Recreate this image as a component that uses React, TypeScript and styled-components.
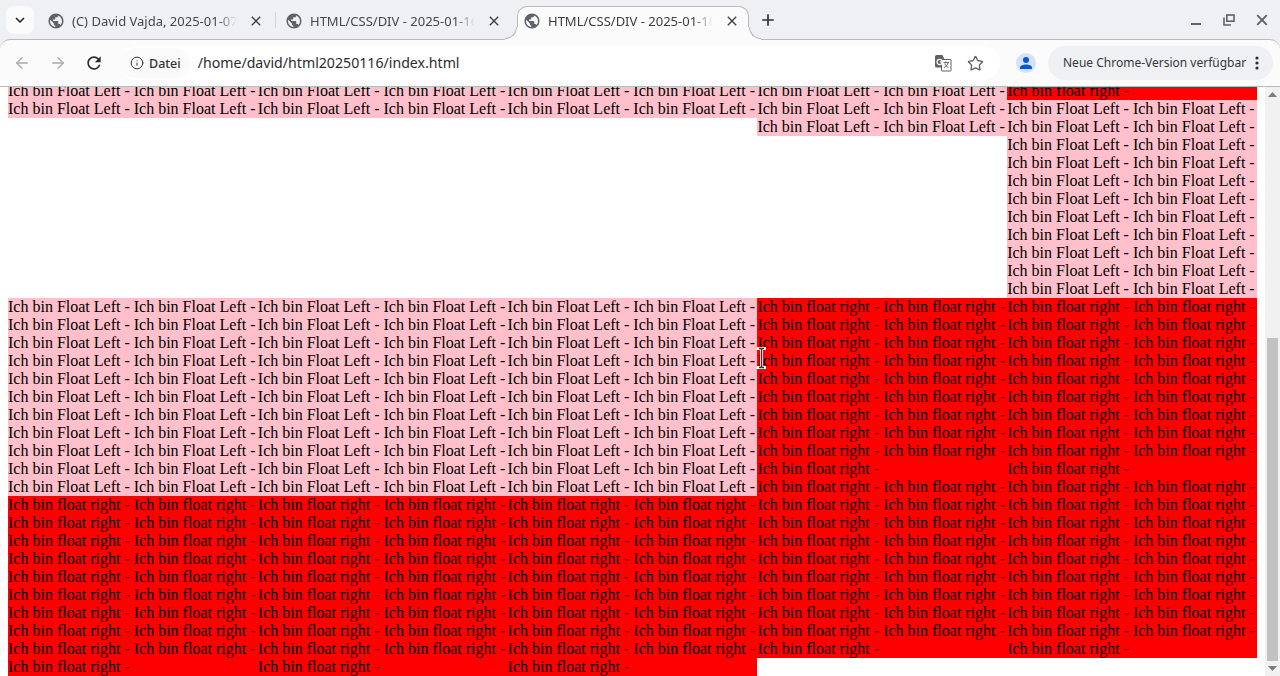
import React from "react";
import styled, { createGlobalStyle, css } from "styled-components";
import { MdPublic, MdRefresh, MdClose, MdAdd, MdExpandMore } from "react-icons/md";
import { ArrowLeft, ArrowRight, Info, Star } from "lucide-react";

const Global = createGlobalStyle`
  html, body { margin: 0; padding: 0; height: 100%; overflow: hidden; background: #fff; }
  #root { height: 100%; }
`;

const Page = styled.div`
  width: 1280px;
  height: 676px;
  display: flex;
  flex-direction: column;
  overflow: hidden;
  background: #eff0f3;
  font-family: "Noto Sans", sans-serif;
`;

const TabStrip = styled.div`
  height: 39px;
  flex: none;
  display: flex;
  align-items: flex-start;
  padding: 6px 0 0 6px;
  box-sizing: border-box;
  position: relative;
  z-index: 2;
`;

const TabMenu = styled.button`
  width: 28px;
  height: 28px;
  margin-right: 7px;
  border: 0;
  padding: 0;
  border-radius: 8px;
  background: #fafafb;
  color: #1f1f1f;
  display: flex;
  align-items: center;
  justify-content: center;
  flex: none;
`;

const Tab = styled.div<{ $active?: boolean; $separator?: boolean }>`
  width: 232px;
  height: 34px;
  margin-right: 6px;
  flex: none;
  box-sizing: border-box;
  padding: 0 8px 6px 6px;
  display: flex;
  align-items: center;
  gap: 8px;
  position: relative;
  border: 1px solid transparent;
  border-bottom: 0;
  border-radius: 10px 10px 0 0;
  color: #45474a;

  ${(p) =>
    p.$separator &&
    css`
      &::after {
        content: "";
        position: absolute;
        left: 233px;
        top: 5px;
        width: 1px;
        height: 16px;
        background: #d6d7da;
      }
    `}

  ${(p) =>
    p.$active &&
    css`
      background: #fbfbfc;
      border-color: #b9babd;
      color: #3c3d40;

      &::before,
      &::after {
        content: "";
        position: absolute;
        bottom: 1px;
        width: 12px;
        height: 12px;
        box-sizing: border-box;
      }
      &::before {
        left: -13px;
        border-radius: 0 0 12px 0;
        border-right: 1px solid #b9babd;
        border-bottom: 1px solid #b9babd;
        box-shadow: 4px 4px 0 4px #fbfbfc;
        clip-path: inset(0 -1px -1px 0);
      }
      &::after {
        right: -13px;
        border-radius: 0 0 0 12px;
        border-left: 1px solid #b9babd;
        border-bottom: 1px solid #b9babd;
        box-shadow: -4px 4px 0 4px #fbfbfc;
        clip-path: inset(0 0 -1px -1px);
      }
    `}
`;

const TabTitle = styled.span`
  flex: 1;
  min-width: 0;
  font-size: 13px;
  line-height: 16px;
  white-space: nowrap;
  -webkit-mask-image: linear-gradient(to right, #000 calc(100% - 20px), transparent 100%);
  mask-image: linear-gradient(to right, #000 calc(100% - 20px), transparent 100%);
`;

const TabClose = styled.span`
  width: 16px;
  height: 16px;
  margin-left: 3px;
  flex: none;
  color: #3c3d40;
  display: flex;
  align-items: center;
  justify-content: center;
`;

const NewTab = styled.button`
  width: 28px;
  height: 28px;
  margin-left: -1px;
  border: 0;
  padding: 0;
  background: transparent;
  color: #2f3033;
  display: flex;
  align-items: center;
  justify-content: center;
  flex: none;
`;

const WindowControls = styled.div`
  margin-left: auto;
  display: flex;
  padding-right: 2px;
`;

const WindowButton = styled.span`
  width: 33px;
  height: 28px;
  display: flex;
  align-items: center;
  justify-content: center;
  color: #5f6368;
`;

const Toolbar = styled.div`
  height: 48px;
  flex: none;
  box-sizing: border-box;
  background: #fbfbfc;
  border-top: 1px solid #b9babd;
  border-bottom: 1px solid #b9babd;
  border-radius: 10px 10px 0 0;
  display: flex;
  align-items: center;
  padding: 0 7px 0 4px;
`;

const NavButton = styled.span<{ $muted?: boolean }>`
  width: 36px;
  height: 34px;
  flex: none;
  display: flex;
  align-items: center;
  justify-content: center;
  color: ${(p) => (p.$muted ? "#a9aaac" : "#2a2b2d")};
`;

const Omnibox = styled.div`
  width: 880px;
  height: 34px;
  margin-left: 8px;
  flex: none;
  border-radius: 17px;
  background: #fff;
  display: flex;
  align-items: center;
`;

const SecurityChip = styled.div`
  height: 30px;
  padding: 0 9px 0 10px;
  border-radius: 15px;
  background: #fafafb;
  display: flex;
  align-items: center;
  gap: 5px;
  font-size: 12.5px;
  font-weight: 500;
  color: #333437;
`;

const Url = styled.span`
  margin: 0 0 2px 8px;
  flex: 1;
  font-size: 14.15px;
  color: #2b2c2e;
  white-space: nowrap;
`;

const OmniIcon = styled.span`
  width: 33px;
  height: 34px;
  flex: none;
  display: flex;
  align-items: center;
  justify-content: center;
  color: #5f6368;
`;

const OmniEnd = styled.span`
  width: 8px;
  flex: none;
`;

const Avatar = styled.span`
  width: 20px;
  height: 20px;
  margin: 0 12px 0 16px;
  border-radius: 50%;
  flex: none;
  background: #d3e3fd;
  display: flex;
  align-items: center;
  justify-content: center;
`;

const UpdatePill = styled.div`
  width: 225px;
  height: 34px;
  flex: none;
  box-sizing: border-box;
  border-radius: 17px;
  background: #eff0f3;
  padding: 0 14px 0 15px;
  display: flex;
  align-items: center;
  justify-content: space-between;
  font-size: 12px;
  color: #36373a;
  white-space: nowrap;
`;

const PillLabel = styled.span`
  margin-bottom: 2px;
`;

const Main = styled.div`
  flex: 1;
  min-height: 0;
  display: flex;
  background: #fff;
`;

const Viewport = styled.div`
  flex: 1;
  min-width: 0;
  overflow: hidden;
  position: relative;
`;

const Document = styled.div`
  margin-top: -5px;
  padding: 0 8px;
  font-family: "Liberation Serif", serif;
  font-size: 16px;
  line-height: 18px;
  color: #000;
`;

const Row = styled.section`
  display: grid;
  grid-template-columns: repeat(5, 20%);
  align-items: start;
`;

const Block = styled.div<{ $tone: "pink" | "red" }>`
  background: ${(p) => (p.$tone === "pink" ? "#ffc0cb" : "#ff0000")};
`;

const Cursor = styled.svg`
  position: absolute;
  left: 757px;
  top: 260px;
`;

const Scrollbar = styled.div`
  width: 15px;
  flex: none;
  background: #f1f1f1;
  display: flex;
  flex-direction: column;
`;

const ScrollArrow = styled.div`
  height: 15px;
  flex: none;
  display: flex;
  align-items: center;
  justify-content: center;
`;

const ScrollTrack = styled.div`
  flex: 1;
  display: flex;
  flex-direction: column;
  justify-content: flex-end;
  align-items: center;
`;

const ScrollThumb = styled.div`
  width: 11px;
  height: 323px;
  background: #c1c1c1;
`;

const left = (n: number) => "Ich bin Float Left - ".repeat(n);
const right = (n: number) => "Ich bin float right - ".repeat(n);

const Globe = () => <MdPublic size={18} color="#5f6368" style={{ flex: "none", margin: "0 -1px" }} />;

const TranslateIcon = () => (
  <svg width="20" height="20" viewBox="0 0 20 20">
    <path d="M2 3.5A1.5 1.5 0 0 1 3.5 2h6l2 4.5v8H3.5A1.5 1.5 0 0 1 2 13z" fill="#5f6368" />
    <rect x="8.5" y="6.5" width="9.5" height="11.5" rx="0.5" fill="#fff" stroke="#5f6368" />
    <path d="M8.6 7.5 10 6l1 1z" fill="#5f6368" />
    <circle cx="6.6" cy="9" r="2.6" fill="none" stroke="#fff" strokeWidth="1.2" />
    <path d="M6.8 9h3" stroke="#fff" strokeWidth="1.2" />
    <path d="M10.5 9.6h5.5M13 8.5v1.2M15 9.8c-.6 2.4-2.2 4-4 4.8M11.8 10.6c.6 1.8 2 3.2 3.6 3.8" fill="none" stroke="#5f6368" strokeWidth="1" />
  </svg>
);

const Person = () => (
  <svg width="14" height="14" viewBox="0 0 14 14" fill="#0b57d0">
    <circle cx="7" cy="4" r="3" />
    <path d="M1 13v-1.5C1 9.6 4 8.4 7 8.4s6 1.2 6 3.1V13z" />
  </svg>
);

const Dots = () => (
  <svg width="4" height="14" viewBox="0 0 4 14" fill="#2c2d30">
    <circle cx="2" cy="2" r="1.6" />
    <circle cx="2" cy="7" r="1.6" />
    <circle cx="2" cy="12" r="1.6" />
  </svg>
);

const Triangle = ({ down }: { down?: boolean }) => (
  <svg width="9" height="5" viewBox="0 0 9 5" fill="#7d7d7d">
    <path d={down ? "M0 0h9L4.5 5z" : "M4.5 0 9 5H0z"} />
  </svg>
);

const tabs = [
  { title: "(C) David Vajda, 2025-01-07,", separator: true },
  { title: "HTML/CSS/DIV - 2025-01-16" },
  { title: "HTML/CSS/DIV - 2025-01-16", active: true },
];

export default function App() {
  return (
    <Page>
      <Global />
      <TabStrip>
        <TabMenu>
          <MdExpandMore size={18} />
        </TabMenu>
        {tabs.map((t, i) => (
          <Tab key={i} $active={t.active} $separator={t.separator}>
            <Globe />
            <TabTitle>{t.title}</TabTitle>
            <TabClose>
              <MdClose size={16} />
            </TabClose>
          </Tab>
        ))}
        <NewTab>
          <MdAdd size={20} />
        </NewTab>
        <WindowControls>
          <WindowButton>
            <svg width="12" height="12" viewBox="0 0 12 12" fill="#5f6368">
              <rect x="1" y="9" width="10" height="2" />
            </svg>
          </WindowButton>
          <WindowButton>
            <svg width="12" height="12" viewBox="0 0 12 12" fill="none" stroke="#5f6368" strokeWidth="1.6">
              <rect x="3.8" y="1" width="7.2" height="6.2" />
              <path d="M1 3.5v7.5h7" />
            </svg>
          </WindowButton>
          <WindowButton>
            <svg width="12" height="12" viewBox="0 0 12 12" stroke="#5f6368" strokeWidth="1.9">
              <path d="M1.2 1.2l9.6 9.6M10.8 1.2l-9.6 9.6" />
            </svg>
          </WindowButton>
        </WindowControls>
      </TabStrip>
      <Toolbar>
        <NavButton $muted>
          <ArrowLeft size={18} strokeWidth={1.8} />
        </NavButton>
        <NavButton $muted>
          <ArrowRight size={18} strokeWidth={1.8} />
        </NavButton>
        <NavButton>
          <MdRefresh size={20} />
        </NavButton>
        <Omnibox>
          <SecurityChip>
            <Info size={14} strokeWidth={1.7} />
            Datei
          </SecurityChip>
          <Url>/home/david/html20250116/index.html</Url>
          <OmniIcon>
            <TranslateIcon />
          </OmniIcon>
          <OmniIcon>
            <Star size={17} strokeWidth={1.9} />
          </OmniIcon>
          <OmniEnd />
        </Omnibox>
        <Avatar>
          <Person />
        </Avatar>
        <UpdatePill>
          <PillLabel>Neue Chrome-Version verfügbar</PillLabel>
          <Dots />
        </UpdatePill>
      </Toolbar>
      <Main>
        <Viewport>
          <Document>
            <Row>
              <Block $tone="pink">{left(4)}</Block>
              <Block $tone="pink">{left(4)}</Block>
              <Block $tone="pink">{left(4)}</Block>
              <Block $tone="pink">{left(6)}</Block>
              <div>
                <Block $tone="red">{right(1)}</Block>
                <Block $tone="pink">{left(22)}</Block>
              </div>
            </Row>
            <Row>
              {[0, 1, 2].map((i) => (
                <div key={i}>
                  <Block $tone="pink">{left(22)}</Block>
                  <Block $tone="red">{right(19)}</Block>
                </div>
              ))}
              {[3, 4].map((i) => (
                <div key={i}>
                  <Block $tone="red">{right(19)}</Block>
                  <Block $tone="red">{right(19)}</Block>
                </div>
              ))}
            </Row>
          </Document>
          <Cursor width="9" height="22" viewBox="0 0 9 22" fill="none">
            <path d="M1.5 1.5h6M4.5 1.5v19M1.5 20.5h6" stroke="#fff" strokeWidth="3" strokeLinecap="square" />
            <path d="M2 1.5h5M4.5 1.5v19M2 20.5h5" stroke="#333" strokeWidth="1.4" />
          </Cursor>
        </Viewport>
        <Scrollbar>
          <ScrollArrow>
            <Triangle />
          </ScrollArrow>
          <ScrollTrack>
            <ScrollThumb />
          </ScrollTrack>
          <ScrollArrow>
            <Triangle down />
          </ScrollArrow>
        </Scrollbar>
      </Main>
    </Page>
  );
}
